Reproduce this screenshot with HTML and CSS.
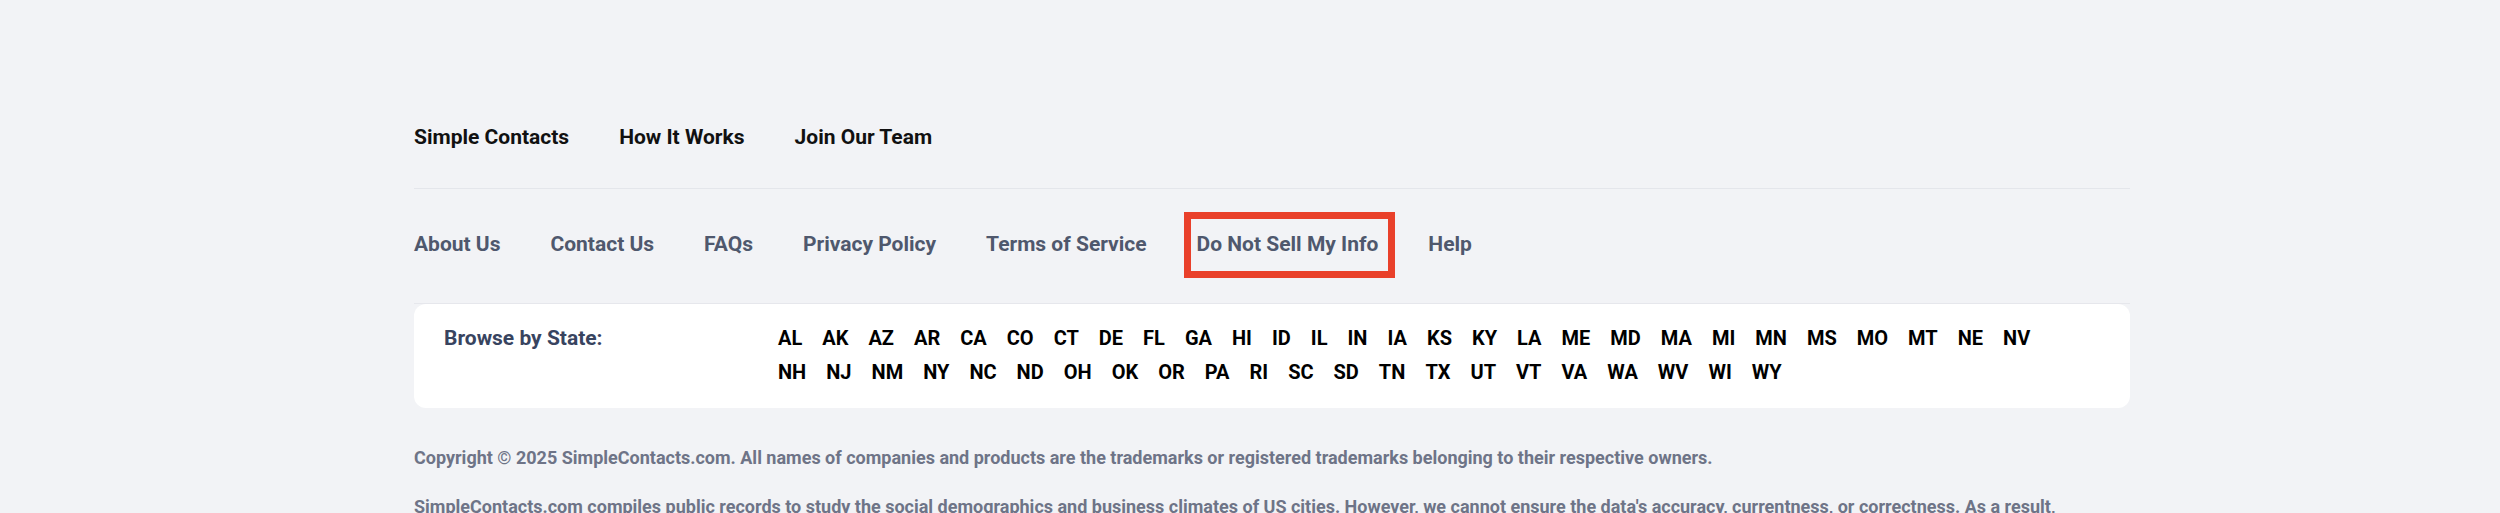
FILE: index.html
```html
<!DOCTYPE html>
<html lang="en">
<head>
<meta charset="utf-8">
<title>Simple Contacts Footer</title>
<link rel="stylesheet" href="styles.css">
</head>
<body>
<footer class="footer">
  <nav class="primary-nav">
    <a href="#">Simple Contacts</a>
    <a href="#">How It Works</a>
    <a href="#">Join Our Team</a>
  </nav>
  <nav class="secondary-nav">
    <a href="#">About Us</a>
    <a href="#">Contact Us</a>
    <a href="#">FAQs</a>
    <a href="#">Privacy Policy</a>
    <a href="#">Terms of Service</a>
    <a href="#" class="highlighted">Do Not Sell My Info<span class="highlight-box"></span></a>
    <a href="#">Help</a>
  </nav>
  <div class="browse-wrap">
    <div class="browse">
      <div class="browse-label">Browse by State:</div>
      <div class="states">
        <a href="#">AL</a><a href="#">AK</a><a href="#">AZ</a><a href="#">AR</a><a href="#">CA</a><a href="#">CO</a><a href="#">CT</a><a href="#">DE</a><a href="#">FL</a><a href="#">GA</a><a href="#">HI</a><a href="#">ID</a><a href="#">IL</a><a href="#">IN</a><a href="#">IA</a><a href="#">KS</a><a href="#">KY</a><a href="#">LA</a><a href="#">ME</a><a href="#">MD</a><a href="#">MA</a><a href="#">MI</a><a href="#">MN</a><a href="#">MS</a><a href="#">MO</a><a href="#">MT</a><a href="#">NE</a><a href="#">NV</a><a href="#">NH</a><a href="#">NJ</a><a href="#">NM</a><a href="#">NY</a><a href="#">NC</a><a href="#">ND</a><a href="#">OH</a><a href="#">OK</a><a href="#">OR</a><a href="#">PA</a><a href="#">RI</a><a href="#">SC</a><a href="#">SD</a><a href="#">TN</a><a href="#">TX</a><a href="#">UT</a><a href="#">VT</a><a href="#">VA</a><a href="#">WA</a><a href="#">WV</a><a href="#">WI</a><a href="#">WY</a>
      </div>
    </div>
  </div>
  <p class="legal">Copyright © 2025 SimpleContacts.com. All names of companies and products are the trademarks or registered trademarks belonging to their respective owners.</p>
  <p class="legal">SimpleContacts.com compiles public records to study the social demographics and business climates of US cities. However, we cannot ensure the data's accuracy, currentness, or correctness. As a result, SimpleContacts.com should not be used for any purpose covered by the FCRA, including employment, tenant screening, credit or insurance eligibility.</p>
</footer>
</body>
</html>
```
FILE: styles.css
```css
* { box-sizing: border-box; }

html, body {
  margin: 0;
  padding: 0;
  background: #f2f3f6;
  font-family: Roboto, "Liberation Sans", Arial, sans-serif;
}

body { overflow: hidden; }

a { text-decoration: none; }

.footer {
  margin-left: 414px;
  width: 1716px;
  padding-top: 123px;
}

.primary-nav {
  display: flex;
  gap: 50px;
  padding-bottom: 37px;
  border-bottom: 1px solid #e4e6eb;
}

.primary-nav a {
  font-size: 21px;
  line-height: 28px;
  font-weight: 700;
  color: #111111;
}

.secondary-nav {
  display: flex;
  gap: 50px;
  margin-top: 41px;
}

.secondary-nav a {
  font-size: 21px;
  line-height: 28px;
  font-weight: 700;
  color: #4f586d;
}

.highlighted { position: relative; }

.highlight-box {
  position: absolute;
  left: -13px;
  right: -17px;
  top: -18px;
  bottom: -20px;
  border: 7px solid #e9402a;
}

.browse-wrap {
  margin-top: 45px;
  border-top: 1px solid #e6e7ec;
}

.browse {
  display: grid;
  grid-template-columns: 334px 1280px;
  background: #ffffff;
  border-radius: 12px;
  padding: 17px 30px 19px;
  height: 104px;
}

.browse-label {
  font-size: 21px;
  line-height: 34px;
  font-weight: 700;
  color: #38445f;
}

.states {
  display: flex;
  flex-wrap: wrap;
  column-gap: 20px;
}

.states a {
  font-size: 20px;
  line-height: 34px;
  font-weight: 700;
  color: #000000;
}

.legal {
  margin: 36px 0 0;
  font-size: 18px;
  line-height: 27px;
  font-weight: 700;
  color: #6e7487;
}

.legal + .legal { margin-top: 22px; }
```
